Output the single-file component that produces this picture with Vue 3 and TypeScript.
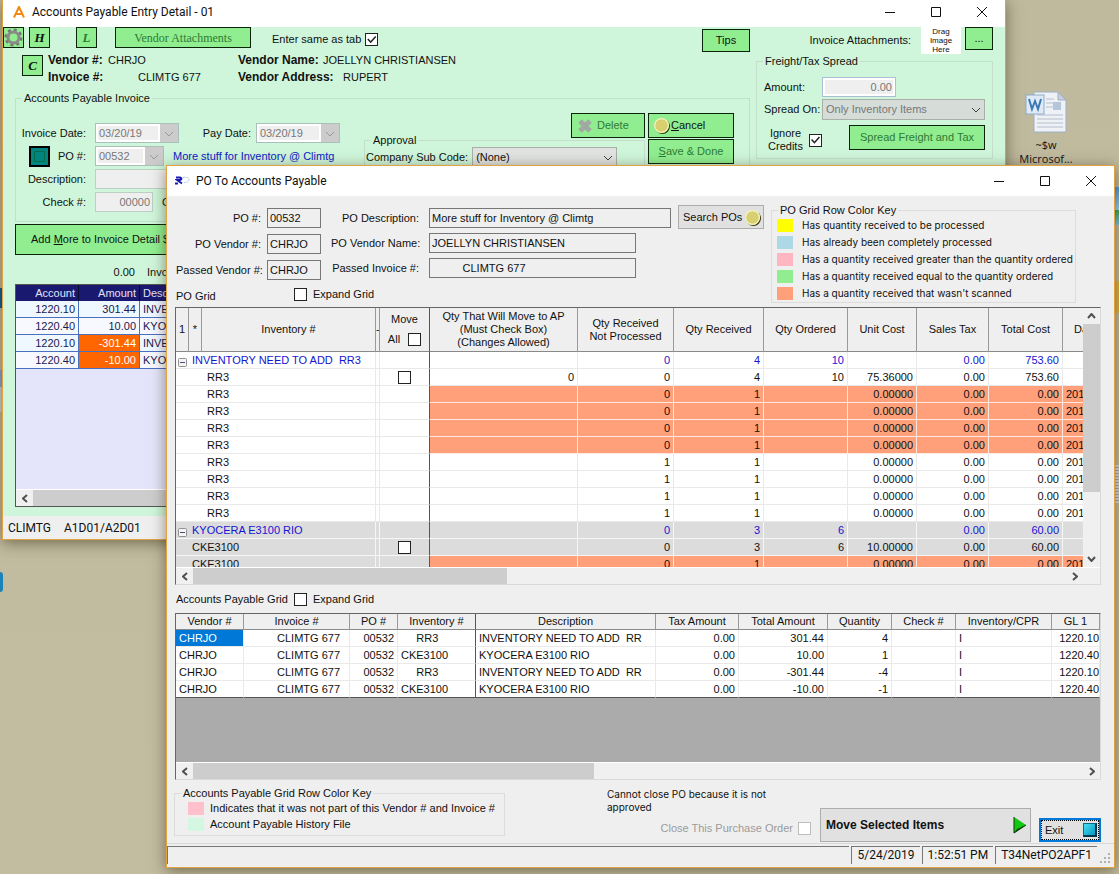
<script setup lang="ts">
interface PoRow {
  kind: 'group' | 'item' | 'scan'
  shaded?: boolean
  name: string
  indent?: boolean
  check?: boolean
  cells: string[]
}

const poHeaders: string[] = ['Qty Received', 'Qty Ordered', 'Unit Cost', 'Sales Tax', 'Total Cost']

const scanned = (): PoRow => ({
  kind: 'scan', name: 'RR3', indent: true,
  cells: ['', '0', '1', '', '0.00000', '0.00', '0.00', '201'],
})
const received = (): PoRow => ({
  kind: 'item', name: 'RR3', indent: true,
  cells: ['', '1', '1', '', '0.00000', '0.00', '0.00', '201'],
})

const poRows: PoRow[] = [
  { kind: 'group', name: 'INVENTORY NEED TO ADD  RR3', cells: ['', '0', '4', '10', '', '0.00', '753.60', ''] },
  { kind: 'item', name: 'RR3', indent: true, check: true, cells: ['0', '0', '4', '10', '75.36000', '0.00', '753.60', ''] },
  scanned(), scanned(), scanned(), scanned(),
  received(), received(), received(), received(),
  { kind: 'group', shaded: true, name: 'KYOCERA E3100 RIO', cells: ['', '0', '3', '6', '', '0.00', '60.00', ''] },
  { kind: 'item', shaded: true, name: 'CKE3100', check: true, cells: ['', '0', '3', '6', '10.00000', '0.00', '60.00', ''] },
  { kind: 'scan', shaded: true, name: 'CKE3100', cells: ['', '0', '1', '', '0.00000', '0.00', '0.00', '201'] },
]

const apHeaders: string[] = ['Vendor #', 'Invoice #', 'PO #', 'Inventory #', 'Description', 'Tax Amount', 'Total Amount', 'Quantity', 'Check #', 'Inventory/CPR', 'GL 1']
const apRows: string[][] = [
  ['CHRJO', 'CLIMTG 677', '00532', '     RR3', 'INVENTORY NEED TO ADD  RR', '0.00', '301.44', '4', '', 'I', '1220.10'],
  ['CHRJO', 'CLIMTG 677', '00532', 'CKE3100', 'KYOCERA E3100 RIO', '0.00', '10.00', '1', '', 'I', '1220.40'],
  ['CHRJO', 'CLIMTG 677', '00532', '     RR3', 'INVENTORY NEED TO ADD  RR', '0.00', '-301.44', '-4', '', 'I', '1220.10'],
  ['CHRJO', 'CLIMTG 677', '00532', 'CKE3100', 'KYOCERA E3100 RIO', '0.00', '-10.00', '-1', '', 'I', '1220.40'],
]
const apNumeric = new Set<number>([1, 2, 5, 6, 7, 10])

const detailRows: { account: string; amount: string; desc: string }[] = [
  { account: '1220.10', amount: '301.44', desc: 'INVENTORY NEED TO ADD' },
  { account: '1220.40', amount: '10.00', desc: 'KYOCERA E3100 RIO' },
  { account: '1220.10', amount: '-301.44', desc: 'INVENTORY NEED TO ADD' },
  { account: '1220.40', amount: '-10.00', desc: 'KYOCERA E3100 RIO' },
]

const poKey: { tone: string; text: string }[] = [
  { tone: 'yellow', text: 'Has quantity received to be processed' },
  { tone: 'blue', text: 'Has already been completely processed' },
  { tone: 'pink', text: 'Has a quantity received greater than the quantity ordered' },
  { tone: 'green', text: 'Has a quantity received equal to the quantity ordered' },
  { tone: 'salmon', text: "Has a quantity received that wasn't scanned" },
]
</script>

<template>
  <div class="desktop">
    <div class="desk-icon word">
      <svg width="42" height="42" viewBox="0 0 42 42">
        <path d="M9 1h24l8 8v32H9z" fill="#eef2f7" stroke="#9fb0c4" />
        <path d="M33 1v8h8z" fill="#c4d0de" stroke="#9fb0c4" />
        <path d="M21 8h8M21 12h8M21 16h8M12 24h26M12 28h26M12 32h26M12 36h26" stroke="#b4becb" />
        <rect x="28" y="11" width="8" height="8" fill="#b6c6da" />
        <rect x="1" y="4" width="18" height="19" fill="#dfeaf6" stroke="#8fabc9" />
        <path d="M4 8l3 10 3-8 3 8 3-10" fill="none" stroke="#3b78b6" stroke-width="2" />
      </svg>
      <span>~$w<br />Microsof...</span>
    </div>
    <div class="edge edge-app"></div>
    <div class="edge edge-folder"></div>
    <div class="edge edge-doc"></div>
    <div class="left-dot dot-a"></div>
    <div class="left-dot dot-b"></div>
    <div class="left-dot dot-c"></div>

    <section class="window back" aria-label="Accounts Payable Entry Detail">
      <header class="titlebar">
        <svg class="app-a" width="12" height="12" viewBox="0 0 12 12"><path d="M1 11.500L6 1l5 10.500M3 8h6" fill="none" stroke="#f08a12" stroke-width="2" /></svg>
        <h1>Accounts Payable Entry Detail - 01</h1>
        <div class="controls">
          <button aria-label="Minimize"><svg width="12" height="12"><path d="M1 6.500h10" /></svg></button>
          <button aria-label="Maximize"><svg width="12" height="12"><path d="M1.500 1.500h9v9h-9z" /></svg></button>
          <button aria-label="Close"><svg width="12" height="12"><path d="M1 1l10 10M11 1L1 11" /></svg></button>
        </div>
      </header>

      <div class="back-body">
        <div class="upper">
          <div class="left-col">
            <div class="toolbar">
              <button class="gbtn sq" aria-label="Settings">
                <svg width="19" height="19" viewBox="0 0 19 19">
                  <circle cx="9.500" cy="9.500" r="7.500" fill="none" stroke="#777" stroke-width="3" stroke-dasharray="3 2.890" />
                  <circle cx="9.500" cy="9.500" r="5.500" fill="none" stroke="#8a8a8a" stroke-width="3" />
                </svg>
              </button>
              <button class="gbtn sq serif">H</button>
              <button class="gbtn sq serif dim spaced">L</button>
              <button class="gbtn attach dim">Vendor Attachments</button>
              <label class="same-tab">Enter same as tab <input type="checkbox" checked /></label>
              <button class="gbtn tips">Tips</button>
            </div>
            <div class="ids">
              <button class="gbtn sq serif c-btn">C</button>
              <dl class="id-a">
                <div><dt>Vendor #:</dt><dd>CHRJO</dd></div>
                <div><dt>Invoice #:</dt><dd class="far">CLIMTG 677</dd></div>
              </dl>
              <dl class="id-b">
                <div><dt>Vendor Name:</dt><dd>JOELLYN CHRISTIANSEN</dd></div>
                <div><dt>Vendor Address:</dt><dd class="mid">RUPERT</dd></div>
              </dl>
            </div>
            <fieldset class="group invoice">
              <legend>Accounts Payable Invoice</legend>
              <div class="invoice-flex">
                <div class="inv-form">
                  <div class="frow">
                    <label for="inv-date">Invoice Date:</label>
                    <span class="picker"><input id="inv-date" value="03/20/19" disabled /><button disabled aria-label="Open invoice date"><svg width="10" height="6"><path d="M1 1l4 4 4-4" /></svg></button></span>
                    <label class="pay" for="pay-date">Pay Date:</label>
                    <span class="picker"><input id="pay-date" value="03/20/19" disabled /><button disabled aria-label="Open pay date"><svg width="10" height="6"><path d="M1 1l4 4 4-4" /></svg></button></span>
                  </div>
                  <div class="frow">
                    <button class="teal" aria-label="PO lookup"></button>
                    <label class="after-teal" for="po-no">PO #:</label>
                    <span class="picker short"><input id="po-no" value="00532" disabled /><button disabled aria-label="Open PO list"><svg width="10" height="6"><path d="M1 1l4 4 4-4" /></svg></button></span>
                    <a class="po-link" href="#">More stuff for Inventory @ Climtg</a>
                  </div>
                  <div class="frow">
                    <label for="inv-desc">Description:</label>
                    <input id="inv-desc" class="plain wide" disabled />
                  </div>
                  <div class="frow">
                    <label for="check-no">Check #:</label>
                    <input id="check-no" class="plain check" value="00000" disabled />
                    <span class="cleared">Check Date:</span>
                  </div>
                </div>
                <div class="inv-right">
                  <div class="actions">
                    <button class="gbtn act del dim">
                      <svg width="16" height="16" viewBox="0 0 16 16"><path d="M3 3l10 10M13 3L3 13" stroke="#a2a8a2" stroke-width="5" /></svg>
                      Delete
                    </button>
                    <button class="gbtn act cancel"><i class="orb"></i><span><u>C</u>ancel</span></button>
                  </div>
                  <div class="approve-row">
                    <fieldset class="group approval">
                      <legend>Approval</legend>
                      <div class="frow">
                        <label for="sub-code">Company Sub Code:</label>
                        <span class="combo"><select id="sub-code"><option>(None)</option></select><svg width="10" height="6"><path d="M1 1l4 4 4-4" /></svg></span>
                      </div>
                    </fieldset>
                    <button class="gbtn act save dim"><span><u>S</u>ave &amp; Done</span></button>
                  </div>
                </div>
              </div>
            </fieldset>
          </div>

          <div class="right-col">
            <div class="attachments">
              <span>Invoice Attachments:</span>
              <div class="drop">Drag<br />Image<br />Here</div>
              <button class="gbtn dots">...</button>
            </div>
            <fieldset class="group freight">
              <legend>Freight/Tax Spread</legend>
              <div class="fr-row"><label for="fr-amt">Amount:</label><input id="fr-amt" class="amount" value="0.00" disabled /></div>
              <div class="fr-row"><label for="fr-on">Spread On:</label><span class="combo off"><select id="fr-on" disabled><option>Only Inventory Items</option></select><svg width="10" height="6"><path d="M1 1l4 4 4-4" /></svg></span></div>
              <div class="fr-row last">
                <label class="ignore" for="ign">Ignore<br />Credits</label><input id="ign" type="checkbox" checked />
                <button class="gbtn spread dim">Spread Freight and Tax</button>
              </div>
            </fieldset>
          </div>
        </div>

        <button class="gbtn add-more"><span>Add <u>M</u>ore to Invoice Detail $</span></button>
        <div class="sum-row"><span class="sum">0.00</span><span>Invoice Total</span></div>
        <div class="detail">
          <table>
            <colgroup><col class="d1" /><col class="d2" /><col /></colgroup>
            <thead><tr><th class="num">Account</th><th class="num">Amount</th><th>Description</th></tr></thead>
            <tbody>
              <tr v-for="(r, i) in detailRows" :key="i">
                <td class="num">{{ r.account }}</td>
                <td class="num" :class="{ neg: r.amount.startsWith('-') }">{{ r.amount }}</td>
                <td>{{ r.desc }}</td>
              </tr>
            </tbody>
          </table>
          <div class="hbar">
            <span class="arr"><svg width="6" height="9"><path d="M5 1L1 4.500 5 8" /></svg></span>
            <div class="track"><div class="thumb long"></div></div>
            <span class="arr"><svg width="6" height="9"><path d="M1 1l4 3.500L1 8" /></svg></span>
          </div>
        </div>
      </div>
      <footer class="back-status"><span>CLIMTG</span><span>A1D01/A2D01</span></footer>
    </section>

    <section class="window front" aria-label="PO To Accounts Payable">
      <header class="titlebar">
        <svg class="app-po" width="15" height="10" viewBox="0 0 15 10">
          <path d="M1 1.500h4q3 1 0 2.500H2l5 3.500M0 7.500h3" fill="none" stroke="#1b1bb0" stroke-width="2" />
          <path d="M8 1.500q6-1 6 2t-5 3" fill="none" stroke="#9cc4ea" stroke-dasharray="2 1" />
        </svg>
        <h1>PO To Accounts Payable</h1>
        <div class="controls">
          <button aria-label="Minimize"><svg width="12" height="12"><path d="M1 6.500h10" /></svg></button>
          <button aria-label="Maximize"><svg width="12" height="12"><path d="M1.500 1.500h9v9h-9z" /></svg></button>
          <button aria-label="Close"><svg width="12" height="12"><path d="M1 1l10 10M11 1L1 11" /></svg></button>
        </div>
      </header>

      <div class="top">
        <div class="top-left">
          <div class="fields">
            <div class="fcol a">
              <div><label for="f-po">PO #:</label><input id="f-po" value="00532" readonly /></div>
              <div><label for="f-ven">PO Vendor #:</label><input id="f-ven" value="CHRJO" readonly /></div>
              <div><label for="f-pas">Passed Vendor #:</label><input id="f-pas" value="CHRJO" readonly /></div>
            </div>
            <div class="fcol b">
              <div><label for="f-desc">PO Description:</label><input id="f-desc" class="w-long" value="More stuff for Inventory @ Climtg" readonly /></div>
              <div><label for="f-name">PO Vendor Name:</label><input id="f-name" value="JOELLYN CHRISTIANSEN" readonly /></div>
              <div><label for="f-inv">Passed Invoice #:</label><input id="f-inv" value="          CLIMTG 677" readonly /></div>
            </div>
            <button class="wbtn search">Search POs <i class="orb"></i></button>
          </div>
          <div class="caption"><span class="cap-po">PO Grid</span><label><input type="checkbox" /> Expand Grid</label></div>
        </div>
        <fieldset class="key po-key">
          <legend>PO Grid Row Color Key</legend>
          <div v-for="k in poKey" :key="k.tone" class="key-row"><i class="swatch" :class="k.tone"></i>{{ k.text }}</div>
        </fieldset>
      </div>

      <div class="grid po-grid">
        <div class="pane">
          <div class="view">
            <table class="po-table">
              <colgroup>
                <col class="w13" /><col class="w13" /><col class="w174" /><col class="w4" /><col class="w50" /><col class="w148" />
                <col class="w96" /><col class="w90" /><col class="w84" /><col class="w69" /><col class="w72" /><col class="w74" /><col />
              </colgroup>
              <thead>
                <tr>
                  <th>1</th><th>*</th><th>Inventory #</th><th class="tiny">-</th>
                  <th class="dark move">Move<label>All <input type="checkbox" /></label></th>
                  <th>Qty That Will Move to AP<br />(Must Check Box)<br />(Changes Allowed)</th>
                  <th>Qty Received<br />Not Processed</th>
                  <th v-for="h in poHeaders" :key="h">{{ h }}</th>
                  <th class="start">Date</th>
                </tr>
              </thead>
              <tbody>
                <tr v-for="(r, i) in poRows" :key="i" :class="[r.kind, { shaded: r.shaded }]">
                  <td colspan="3" class="name" :class="{ indent: r.indent }">
                    <svg v-if="r.kind === 'group'" class="minus" width="9" height="9"><rect x=".5" y=".5" width="8" height="8" rx="1" fill="#f4f4f4" stroke="#919191" /><path d="M2 4.500h5" stroke="#44507a" /></svg>{{ r.name }}
                  </td>
                  <td></td>
                  <td class="dark box"><input v-if="r.check" type="checkbox" :aria-label="'Move ' + r.name" /></td>
                  <td v-for="(c, j) in r.cells" :key="j" class="q" :class="{ date: j === 7 }">{{ c }}</td>
                </tr>
              </tbody>
            </table>
          </div>
          <div class="vbar">
            <span class="arr"><svg width="9" height="6"><path d="M1 5l3.500-4L8 5" /></svg></span>
            <div class="vtrack"><div class="vthumb"></div></div>
            <span class="arr"><svg width="9" height="6"><path d="M1 1l3.500 4L8 1" /></svg></span>
          </div>
        </div>
        <div class="hbar corner">
          <span class="arr"><svg width="6" height="9"><path d="M5 1L1 4.500 5 8" /></svg></span>
          <div class="track"><div class="thumb t1"></div></div>
          <span class="arr"><svg width="6" height="9"><path d="M1 1l4 3.500L1 8" /></svg></span>
        </div>
      </div>

      <div class="caption second"><span>Accounts Payable Grid</span><label><input type="checkbox" /> Expand Grid</label></div>

      <div class="grid ap-grid">
        <div class="ap-view">
          <table class="ap-table">
            <colgroup>
              <col class="w68" /><col class="w106" /><col class="w48" /><col class="w78" /><col class="w180" /><col class="w83" />
              <col class="w89" /><col class="w64" /><col class="w64" /><col class="w96" /><col />
            </colgroup>
            <thead><tr><th v-for="(h, i) in apHeaders" :key="h" :class="{ dark: i === 3 }">{{ h }}</th></tr></thead>
            <tbody>
              <tr v-for="(r, i) in apRows" :key="i">
                <td v-for="(c, j) in r" :key="j" :class="{ q: apNumeric.has(j), inv: j === 1, dark: j === 3, sel: i === 0 && j === 0, last: j === 10 }">{{ c }}</td>
              </tr>
            </tbody>
          </table>
        </div>
        <div class="hbar">
          <span class="arr"><svg width="6" height="9"><path d="M5 1L1 4.500 5 8" /></svg></span>
          <div class="track"><div class="thumb t2"></div></div>
          <span class="arr"><svg width="6" height="9"><path d="M1 1l4 3.500L1 8" /></svg></span>
        </div>
      </div>

      <div class="bottom">
        <fieldset class="key ap-key">
          <legend>Accounts Payable Grid Row Color Key</legend>
          <div class="key-row"><i class="swatch pale-pink"></i>Indicates that it was not part of this Vendor # and Invoice #</div>
          <div class="key-row"><i class="swatch mint"></i>Account Payable History File</div>
        </fieldset>
        <div class="close-po">
          <p>Cannot close PO because it is not approved</p>
          <label>Close This Purchase Order <input type="checkbox" disabled /></label>
        </div>
        <button class="wbtn move-btn">Move Selected Items
          <svg width="14" height="18" viewBox="0 0 14 18"><path d="M1 1l12 8L1 17z" fill="#12c912" /><path d="M13 9L1 17l3-4z" fill="#054d05" /><path d="M1 1v16M1 17L13 9" fill="none" stroke="#063806" /></svg>
        </button>
        <button class="exit"><span>Exit</span><i></i></button>
      </div>

      <footer class="status">
        <span class="grow"></span><span>5/24/2019</span><span>1:52:51 PM</span><span>T34NetPO2APF1</span>
        <svg width="11" height="11" viewBox="0 0 11 11"><path d="M8 0h2v2H8zM4 4h2v2H4zM8 4h2v2H8zM0 8h2v2H0zM4 8h2v2H4zM8 8h2v2H8z" fill="#b0b0b0" /></svg>
      </footer>
    </section>
  </div>
</template>

<style>
html,
body {
  margin: 0;
  background: #c0ba9e;
}
</style>

<style scoped>
.desktop {
  position: relative;
  min-height: 100vh;
  overflow: hidden;
  background: linear-gradient(180deg, #bfb99d, #c2bca0);
  font-family: "Liberation Sans", Arial, sans-serif;
  font-size: 11px;
  line-height: 13px;
  color: #111;
}
.desktop *,
.desktop *::after {
  box-sizing: border-box;
}
button,
input,
select {
  font: inherit;
  color: inherit;
  margin: 0;
  padding: 0;
  border-radius: 0;
}
fieldset,
legend,
dl,
dd,
p,
h1 {
  margin: 0;
  padding: 0;
  min-width: 0;
}
.desk-icon {
  position: absolute;
  top: 91px;
  right: 35px;
  width: 76px;
  display: flex;
  flex-direction: column;
  align-items: center;
  gap: 5px;
  text-align: center;
  font-family: "Open Sans", sans-serif;
  line-height: 14px;
}
.edge {
  position: absolute;
  right: 0;
  width: 6px;
}
.edge-app { top: 187px; height: 38px; background: linear-gradient(#4f9ad6, #9fd0ee 60%, #35a852 61%, #7cc4ea); }
.edge-folder { top: 281px; height: 32px; background: #dfb14a; }
.edge-doc { top: 465px; height: 38px; background: repeating-linear-gradient(#d8d8d8 0 2px, #a9a9a9 2px 3px); }
.left-dot {
  position: absolute;
  left: 0;
  width: 3px;
}
.dot-a { top: 288px; height: 20px; background: #0d5f9a; }
.dot-b { top: 370px; height: 42px; background: linear-gradient(#8fa5d5 40%, #d0d0d0 41%); }
.dot-c { top: 572px; height: 20px; background: #1b83b8; border-radius: 0 3px 3px 0; }

.window {
  position: absolute;
  border: 1px solid #e0a243;
  background: #efefef;
  box-shadow: 0 3px 14px rgba(40, 30, 0, .5);
}
.back {
  top: -1px;
  left: 2px;
  right: 113px;
}
.front {
  top: 165px;
  left: 166px;
  right: 4px;
}
.titlebar {
  display: flex;
  align-items: center;
  background: #fff;
  height: 30px;
  padding-left: 8px;
}
.back .titlebar {
  height: 27px;
  padding: 0 0 4px 10px;
}
.titlebar h1 {
  font: 400 12px/16px Roboto, "Noto Sans", sans-serif;
  flex: 1;
  margin-left: 6px;
}
.back .titlebar h1 { margin-left: 7px; }
.controls {
  display: flex;
}
.controls button {
  width: 46px;
  height: 22px;
  border: 0;
  background: none;
  display: grid;
  place-items: center;
}
.controls path {
  fill: none;
  stroke: #111;
}

/* green buttons */
.gbtn {
  background: #90ee90;
  border: 1px solid #0a240a;
  height: 25px;
  flex: none;
}
.gbtn.dim { color: #2f7a35; }
.gbtn.sq {
  width: 21px;
  height: 21px;
  display: grid;
  place-items: center;
}
.gbtn.serif {
  font: italic 700 13px/15px "Liberation Serif", serif;
}
.back-body {
  background: #cff6da;
  height: 489px;
}
.upper {
  display: flex;
  justify-content: space-between;
  height: 192px;
}
.left-col {
  flex: 1;
  margin-right: 6px;
}
.toolbar {
  display: flex;
  gap: 5px;
  height: 25px;
}
.toolbar .spaced { margin-left: 21px; }
.toolbar .attach {
  width: 136px;
  height: 21px;
  margin-left: 13px;
  font: 12px/14px "Liberation Serif", serif;
}
.same-tab {
  display: flex;
  align-items: center;
  gap: 4px;
  margin-left: 16px;
}
.toolbar .tips {
  width: 48px;
  height: 23px;
  margin-left: auto;
  margin-top: 2px;
}
input[type="checkbox"] {
  appearance: none;
  width: 13px;
  height: 13px;
  flex: none;
  border: 1px solid #222;
  background: #fff;
  position: relative;
}
input[type="checkbox"]:checked::after {
  content: "";
  position: absolute;
  inset: 1px;
  background: #222;
  clip-path: polygon(0 50%, 12% 38%, 38% 66%, 88% 10%, 100% 22%, 38% 92%);
}
input[type="checkbox"]:disabled { border-color: #bcbcbc; }
.ids {
  display: flex;
  padding-left: 19px;
  height: 38px;
}
.c-btn { margin-top: 3px; }
.ids dl {
  font-size: 12px;
  line-height: 17px;
}
.ids dl > div { display: flex; }
.ids dt {
  font-weight: 700;
  width: 60px;
}
.ids dd { font-size: 11px; }
.id-a { margin-left: 5px; width: 190px; }
.id-b dt { width: 85px; white-space: nowrap; }
.ids .far { margin-left: 30px; }
.ids .mid { margin-left: 20px; }
.group {
  border: 1px solid #c3dfca;
}
.invoice {
  margin: 2px 0 0 12px;
}
.group legend {
  margin-left: 6px;
  padding: 0 2px;
}
.invoice-flex {
  display: flex;
  justify-content: space-between;
  padding: 0 15px 7px 5px;
}
.inv-form {
  display: flex;
  flex-direction: column;
  gap: 3px;
  padding-top: 18px;
}
.frow {
  display: flex;
  align-items: center;
  height: 20px;
}
.inv-form .frow > label {
  width: 65px;
  text-align: right;
  margin-right: 9px;
}
.inv-form .frow > label.pay { width: 72px; margin-right: 5px; }
.inv-form .frow > label.after-teal { width: 36px; }
.teal {
  width: 21px;
  height: 21px;
  margin-left: 8px;
  border: 2px solid #000;
  background: #00867f;
  box-shadow: inset 0 0 0 3px #00867f, inset 0 0 0 4px #0a6a4c;
}
.picker {
  display: flex;
  width: 84px;
  height: 20px;
  border: 1px solid #a9c0bd;
  background: #fff;
}
.picker.short { width: 69px; }
.picker input {
  flex: 1;
  min-width: 0;
  border: 2px solid #fff;
  background: #efefef;
  color: #777;
  padding-left: 1px;
}
.picker button {
  width: 18px;
  border: 0;
  background: #ccc;
}
.picker path,
.combo path {
  fill: none;
  stroke: #999;
}
.combo path { stroke: #444; }
.po-link {
  color: #0d20c8;
  text-decoration: none;
  margin-left: 9px;
}
.plain {
  height: 20px;
  border: 1px solid #bcd0c4;
  background: #efefef;
  color: #777;
}
.plain.wide { width: 180px; }
.plain.check {
  width: 58px;
  text-align: right;
  padding-right: 2px;
}
.cleared { margin-left: 9px; }
.inv-right {
  padding-top: 8px;
  width: 370px;
}
.actions {
  display: flex;
  justify-content: flex-end;
  gap: 3px;
}
.act {
  display: flex;
  align-items: center;
  gap: 4px;
}
.del { width: 74px; padding-left: 5px; }
.cancel { width: 86px; padding-left: 5px; gap: 2px; }
.save { width: 86px; justify-content: center; margin-top: 2px; }
.orb {
  width: 15px;
  height: 15px;
  flex: none;
  border-radius: 50%;
  background: radial-gradient(circle at 50% 50%, #d8d070 55%, #f4f0b0 60%);
  box-shadow: 1px 1px 0 0 #3c3a18;
}
.approve-row {
  display: flex;
  gap: 3px;
  margin-top: -1px;
}
.approval {
  flex: 1;
  height: 80px;
  margin-top: -3px;
}
.approval .frow { padding-left: 1px; }
.approval .combo { margin-left: 4px; }
.combo {
  position: relative;
  display: inline-flex;
}
.combo select {
  appearance: none;
  width: 145px;
  height: 21px;
  padding-left: 3px;
  border: 1px solid #a8b0a8;
  background: #e1e3e1;
}
.combo svg {
  position: absolute;
  right: 4px;
  top: 8px;
}
.combo.off select {
  width: 163px;
  background: #d6dcd7;
  color: #777;
  opacity: 1;
}
.right-col {
  width: 249px;
  padding-right: 12px;
}
.attachments {
  display: flex;
  justify-content: flex-end;
  align-items: flex-start;
}
.attachments > span { margin-top: 7px; }
.drop {
  width: 40px;
  height: 27px;
  margin: 0 4px 0 10px;
  background: #fff;
  text-align: center;
  font-size: 8px;
  line-height: 9px;
}
.dots { width: 28px; height: 23px; }
.freight {
  height: 104px;
  margin-top: 1px;
}
.fr-row {
  display: flex;
  align-items: center;
  height: 22px;
}
.freight .fr-row:nth-of-type(1) { margin-top: 8px; }
.fr-row label { width: 65px; padding-left: 7px; }
.fr-row .ignore {
  width: 43px;
  text-align: center;
  padding: 0;
  margin-left: 7px;
}
.fr-row.last {
  margin-top: 5px;
  height: 30px;
  gap: 2px;
}
.spread { width: 136px; margin-left: 25px; align-self: flex-start; }
.amount {
  width: 74px;
  height: 20px;
  border: 1px solid #a9c0d5;
  outline: 2px solid #fff;
  outline-offset: -3px;
  background: #efefef;
  color: #777;
  text-align: right;
  padding-right: 3px;
}
.add-more {
  display: block;
  width: 210px;
  height: 31px;
  margin: 5px 0 0 12px;
  padding-left: 15px;
  text-align: left;
}
.sum-row {
  display: flex;
  gap: 12px;
  height: 29px;
  padding-top: 11px;
}
.sum {
  width: 132px;
  text-align: right;
}
.detail {
  margin: 0 12px;
  height: 223px;
  border: 1px solid #555;
  background: #e4e4fa;
  display: flex;
  flex-direction: column;
  justify-content: space-between;
}
table {
  table-layout: fixed;
  border-collapse: separate;
  border-spacing: 0;
  line-height: 15px;
}
th {
  font-weight: 400;
}
th,
td {
  padding: 0;
  overflow: hidden;
  white-space: pre;
}
.detail table { width: 100%; }
.d1 { width: 63px; }
.d2 { width: 61px; }
.detail th {
  background: #191970;
  color: #e2e2f8;
  text-align: left;
  padding: 0 3px;
  height: 16px;
  border-right: 1px solid #0a0a30;
}
.detail td {
  height: 17px;
  padding: 0 3px;
  background: #f0f8ff;
  color: #191950;
  border-right: 1px solid #4a70c0;
  border-bottom: 1px solid #4a70c0;
}
.detail tr:nth-child(even) td { background: #f8f8ff; }
.detail tbody td.neg,
.detail tbody tr:nth-child(even) td.neg { background: #f60; color: #fff; }
.detail .num { text-align: right; }
.hbar {
  display: flex;
  height: 17px;
  flex: none;
  background: #f0f0f0;
  border-top: 1px solid #fff;
}
.arr {
  width: 17px;
  height: 16px;
  flex: none;
  display: grid;
  place-items: center;
}
.arr path {
  fill: none;
  stroke: #505050;
  stroke-width: 2;
}
.track { flex: 1; }
.thumb {
  height: 100%;
  background: #cdcdcd;
}
.thumb.long { width: 70%; }
.thumb.t1 { width: 36%; }
.thumb.t2 { width: 45%; }
.back-status {
  display: flex;
  gap: 13px;
  height: 23px;
  padding: 4px 5px;
  font: 12px/16px Roboto, sans-serif;
}

/* purchase order window */
.top {
  display: flex;
  gap: 7px;
  padding: 8px 12px 4px 9px;
}
.top-left {
  display: flex;
  flex-direction: column;
}
.fields {
  display: flex;
  padding-top: 1px;
  flex: 1;
}
.fcol {
  display: flex;
  flex-direction: column;
  padding-top: 3px;
  gap: 6px;
}
.fcol.b { gap: 5px; margin-left: 10px; }
.fcol > div {
  display: flex;
  align-items: center;
  gap: 6px;
}
.fcol.b > div { gap: 10px; }
.fcol label {
  width: 85px;
  text-align: right;
  white-space: nowrap;
}
.fcol.b label { width: 88px; }
.fcol input {
  height: 20px;
  width: 54px;
  padding: 0 2px;
  border: 1px solid #777;
  background: #efefef;
}
.fcol.b input { width: 207px; }
.fcol.b input.w-long { width: 242px; }
.wbtn {
  background: #e1e1e1;
  border: 1px solid #adadad;
}
.search {
  display: flex;
  align-items: center;
  justify-content: space-between;
  width: 86px;
  height: 24px;
  margin-left: 7px;
  padding: 0 3px 0 4px;
}
.caption {
  display: flex;
  align-items: center;
  height: 18px;
}
.caption label {
  display: flex;
  align-items: center;
  gap: 6px;
}
.cap-po { width: 118px; padding-top: 4px; }
.caption.second {
  height: 28px;
  padding-left: 9px;
}
.caption.second span { width: 118px; }
.key {
  border: 1px solid #dcdcdc;
}
.key legend {
  margin-left: 6px;
  padding: 0 2px;
}
.key-row {
  display: flex;
  align-items: center;
  height: 17px;
  gap: 9px;
  white-space: nowrap;
}
.po-key {
  width: 305px;
  padding-left: 5px;
  font-family: Inter, sans-serif;
  font-size: 10px;
}
.po-key legend {
  margin-left: 1px;
  font-family: "Liberation Sans", Arial, sans-serif;
  font-size: 11px;
}
.ap-key {
  width: 331px;
  height: 49px;
  padding-left: 13px;
}
.ap-key legend { margin-left: -7px; }
.ap-key .key-row { height: 16px; gap: 6px; }
.swatch { width: 16px; height: 13px; }
.yellow { background: #ff0; }
.blue { background: #add8e6; }
.pink { background: #ffb6c1; }
.green { background: #90ee90; }
.salmon { background: #ffa07a; }
.pale-pink { background: #ffc0cb; }
.mint { background: #d4f7e2; }
.grid {
  margin: 0 13px 0 8px;
  border: 1px solid #dadada;
  border-top-color: #666;
  border-left-color: #666;
}
.pane {
  display: flex;
  height: 259px;
}
.view {
  flex: 1;
  min-width: 0;
  overflow: hidden;
  background: #fff;
}
.po-table { width: 1000px; }
.ap-table { width: 100%; }
.w4 { width: 4px; }
.w13 { width: 13px; }
.w48 { width: 48px; }
.w50 { width: 50px; }
.w64 { width: 64px; }
.w68 { width: 68px; }
.w69 { width: 69px; }
.w72 { width: 72px; }
.w74 { width: 74px; }
.w78 { width: 78px; }
.w83 { width: 83px; }
.w84 { width: 84px; }
.w89 { width: 89px; }
.w90 { width: 90px; }
.w96 { width: 96px; }
.w106 { width: 106px; }
.w148 { width: 148px; }
.w174 { width: 174px; }
.w180 { width: 180px; }
.grid th {
  background: #efefef;
  border-right: 1px solid #9a9a9a;
  border-bottom: 1px solid #8a8a8a;
  text-align: center;
}
.po-table th {
  height: 44px;
  line-height: 13px;
}
.po-table .start { text-align: left; padding-left: 11px; }
.move label {
  display: flex;
  align-items: center;
  justify-content: center;
  gap: 5px;
  padding-top: 7px;
}
.grid td {
  height: 17px;
  background: #fff;
  border-right: 1px solid #e9e9e9;
  border-bottom: 1px solid #e9e9e9;
  padding-left: 3px;
}
.grid td.q {
  text-align: right;
  padding: 0 3px 0 0;
}
.grid td.dark,
.grid th.dark { border-right-color: #555; }
.grid tr.shaded td { background: #dcdcdc; border-bottom-color: #f6f6f6; }
.grid tr.shaded td:not(.dark) { border-right-color: #f6f6f6; }
.grid tr.scan td.q { background: #ffa07a; border-color: #fbe9e0; }
.grid td.q.date { text-align: left; padding-left: 3px; }
.grid td.name { padding-left: 2px; }
.grid td.name.indent { padding-left: 31px; }
.grid tr.shaded.item td.name,
.grid tr.shaded.scan td.name { padding-left: 16px; }
.group .minus {
  margin-right: 5px;
  vertical-align: -3px;
}
tr.group { color: #1414d2; }
.grid td.box { text-align: center; padding: 0; line-height: 0; }
.box input { vertical-align: middle; }
.vbar {
  width: 17px;
  background: #f0f0f0;
  display: flex;
  flex-direction: column;
}
.vtrack { flex: 1; }
.vthumb { height: 74%; background: #cdcdcd; }
.hbar.corner { padding-right: 17px; }
.ap-view {
  height: 148px;
  background: #ababab;
  overflow: hidden;
}
.ap-table th { height: 16px; }
.ap-table td.inv { padding-right: 9px; }
.ap-table tr:last-child td { border-bottom-color: #555; }
.grid td.sel { background: #0078d7; color: #fff; }
.grid td.last { padding-right: 0; }
.bottom {
  display: flex;
  padding: 7px 13px 0 7px;
  height: 63px;
}
.close-po {
  margin-left: auto;
  width: 204px;
  padding-top: 1px;
}
.close-po p {
  width: 170px;
  font-family: Inter, sans-serif;
  font-size: 10px;
  line-height: 13px;
}
.close-po label {
  display: flex;
  justify-content: flex-end;
  align-items: center;
  gap: 5px;
  margin-top: 8px;
  color: #9b9b9b;
}
.move-btn {
  display: flex;
  justify-content: space-between;
  align-items: center;
  width: 211px;
  height: 34px;
  margin: 21px 0 0 9px;
  padding: 0 3px 0 5px;
  font-weight: 700;
  font-size: 12px;
}
.exit {
  display: flex;
  align-items: center;
  justify-content: space-between;
  width: 62px;
  height: 24px;
  margin: 31px 0 0 8px;
  padding: 0 2px 0 4px;
  border: 2px solid #0078d7;
  outline: 1px dotted #000;
  outline-offset: -3px;
  background: #e1e1e1;
}
.exit i {
  width: 14px;
  height: 14px;
  background: linear-gradient(135deg, #48e0f4, #0596c4);
  border: 1px solid #0a6a8a;
  border-right: 2px solid #04364a;
  border-bottom: 2px solid #04364a;
}
.status {
  display: flex;
  gap: 2px;
  height: 24px;
  padding: 2px 3px 3px 0;
  border-top: 1px solid #d8d8d8;
  font: 12px/16px Roboto, sans-serif;
}
.status span {
  border-left: 1px solid #777;
  border-top: 1px solid #777;
  padding: 0 5px;
}
.status .grow { flex: 1; }
.status svg { align-self: flex-end; margin-left: 1px; }
</style>
